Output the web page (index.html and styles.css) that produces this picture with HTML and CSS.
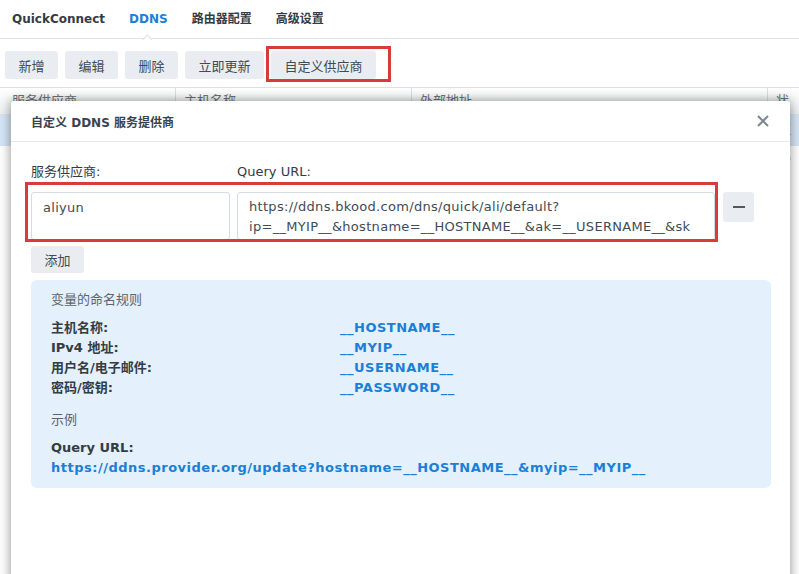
FILE: index.html
```html
<!DOCTYPE html>
<html>
<head>
  <meta charset="utf-8">
  <title>DDNS</title>
  <link rel="stylesheet" href="styles.css">
</head>
<body>
  <div class="tabbar">
    <span class="tab">QuickConnect</span>
    <span class="tab active">DDNS</span>
    <span class="tab">路由器配置</span>
    <span class="tab">高级设置</span>
  </div>

  <div class="toolbar">
    <button class="btn">新增</button>
    <button class="btn">编辑</button>
    <button class="btn">删除</button>
    <button class="btn">立即更新</button>
    <button class="btn">自定义供应商</button>
  </div>

  <div class="grid">
    <div class="grid-head">
      <div class="col c1">服务供应商</div>
      <div class="col c2">主机名称</div>
      <div class="col c3">外部地址</div>
      <div class="col c4">状态</div>
    </div>
    <div class="grid-row selected">
      <div class="col c1"></div>
      <div class="col c2"></div>
      <div class="col c3"></div>
      <div class="col c4 ok">正常</div>
    </div>
  </div>

  <div class="mark mark-toolbar"></div>

  <div class="dialog">
    <div class="dialog-head">
      <span class="dialog-title">自定义 DDNS 服务提供商</span>
      <button class="close" title="关闭">
        <svg width="12" height="12" viewBox="0 0 12 12"><path d="M1 1L11 11M11 1L1 11" stroke="#7d868f" stroke-width="2" fill="none"/></svg>
      </button>
    </div>
    <div class="dialog-body">
      <div class="form-labels">
        <label class="lbl-name">服务供应商:</label>
        <label>Query URL:</label>
      </div>
      <div class="form-row">
        <input class="field field-name" type="text" value="aliyun">
        <textarea class="field field-url">https://ddns.bkood.com/dns/quick/ali/default?
ip=__MYIP__&amp;hostname=__HOSTNAME__&amp;ak=__USERNAME__&amp;sk
=__PASSWORD__</textarea>
        <button class="btn btn-minus">
          <svg width="12" height="12" viewBox="0 0 12 12"><rect x="0" y="5" width="12" height="2" fill="#4f5963"/></svg>
        </button>
      </div>
      <button class="btn btn-add">添加</button>

      <div class="info">
        <div class="info-title">变量的命名规则</div>
        <div class="vars">
          <span>主机名称:</span><span class="val">__HOSTNAME__</span>
          <span>IPv4 地址:</span><span class="val">__MYIP__</span>
          <span>用户名/电子邮件:</span><span class="val">__USERNAME__</span>
          <span>密码/密钥:</span><span class="val">__PASSWORD__</span>
        </div>
        <div class="info-title example">示例</div>
        <div class="example-label">Query URL:</div>
        <div class="example-url">https://ddns.provider.org/update?hostname=__HOSTNAME__&amp;myip=__MYIP__</div>
      </div>
    </div>
    <div class="mark mark-form"></div>
  </div>
</body>
</html>
```

FILE: styles.css
```css
body {
  margin: 0;
  height: 574px;
  overflow: hidden;
  position: relative;
  font-family: "DejaVu Sans", "Noto Sans CJK SC", sans-serif;
  font-size: 13px;
  color: #414b55;
  background: #fff;
}
.tabbar {
  display: flex;
  gap: 24px;
  height: 38px;
  padding-left: 12px;
  border-bottom: 1px solid #dde1e5;
}
.tab {
  position: relative;
  font-size: 12px;
  font-weight: bold;
  line-height: 38px;
  color: #333c45;
}
.tab.active {
  color: #1a7fd6;
}
.tab.active::after {
  content: "";
  position: absolute;
  left: 50%;
  top: 36px;
  width: 6px;
  height: 6px;
  margin-left: -4px;
  background: #fff;
  border-left: 1px solid #dde1e5;
  border-top: 1px solid #dde1e5;
  transform: rotate(45deg);
}
.toolbar {
  display: flex;
  gap: 7px;
  padding: 12px 5px 8px;
}
.btn {
  font: inherit;
  height: 28px;
  padding: 0 13.5px;
  border: none;
  border-radius: 3px;
  background: #e9edf1;
  color: #414b55;
}
.grid-head, .grid-row {
  display: flex;
}
.grid-head {
  height: 26px;
  border-top: 1px solid #dcdfe3;
  background: linear-gradient(#fff, #eef0f2);
  color: #6b737b;
}
.grid-row {
  height: 32px;
}
.grid-row.selected {
  background: #d6e6f6;
}
.col {
  box-sizing: border-box;
  padding-left: 8px;
  line-height: 26px;
  border-right: 1px solid #dcdfe3;
}
.grid-row .col {
  border-right: none;
  line-height: 32px;
}
.c1 { width: 176px; padding-left: 12px; }
.c2 { width: 236px; }
.c3 { width: 356px; }
.c4 { flex: 1; border-right: none; }
.grid-row .c4 { padding-left: 10px; }
.ok { color: #2a9a2a; }
.mark {
  position: absolute;
  box-sizing: border-box;
  border: 3px solid #d93b3b;
  pointer-events: none;
}
.mark-toolbar {
  left: 266px;
  top: 46px;
  width: 125px;
  height: 36px;
}
.mark-form {
  left: 14px;
  top: 81px;
  width: 693px;
  height: 60px;
}
.dialog {
  position: absolute;
  left: 11px;
  top: 101px;
  width: 779px;
  height: 520px;
  background: #fff;
  border-radius: 3px 3px 0 0;
  box-shadow: 0 0 12px rgba(0, 0, 0, 0.45);
}
.dialog-head {
  display: flex;
  align-items: center;
  justify-content: space-between;
  height: 40px;
  padding: 0 21px 0 20px;
  border-bottom: 1px solid #e6e9ec;
}
.dialog-title {
  font-size: 12px;
  font-weight: bold;
  color: #3a434c;
}
.close {
  display: flex;
  padding: 0;
  border: none;
  background: none;
}
.dialog-body {
  padding: 20px 19px 0 20px;
}
.form-labels {
  display: flex;
  line-height: 20px;
  color: #333c45;
}
.lbl-name {
  width: 206px;
}
.form-row {
  display: flex;
  align-items: flex-start;
  gap: 7px;
  margin-top: 10px;
}
.field {
  box-sizing: border-box;
  height: 48px;
  margin: 0;
  padding: 4px 11px;
  border: 1px solid #d5dbe1;
  border-radius: 3px;
  font: inherit;
  line-height: 20px;
  letter-spacing: 0.3px;
  color: #414b55;
  background: #fff;
}
.field-name {
  width: 199px;
  padding-bottom: 22px;
}
.field-url {
  width: 478px;
  resize: none;
  overflow: hidden;
  white-space: pre;
}
.btn-minus {
  display: flex;
  align-items: center;
  justify-content: center;
  width: 31px;
  height: 30px;
  margin-left: 1px;
  padding: 0;
}
.btn-add {
  height: 27px;
  margin-top: 6px;
}
.info {
  margin-top: 7px;
  padding: 10px 20px;
  border-radius: 6px;
  background: #e4f0fb;
  line-height: 20px;
  color: #333c45;
}
.info-title {
  color: #5c656e;
}
.vars {
  display: grid;
  grid-template-columns: 289px auto;
  margin-top: 8px;
  font-weight: bold;
}
.val, .example-url {
  color: #1a7fd6;
  font-weight: bold;
  letter-spacing: 0.5px;
}
.example {
  margin-top: 12px;
}
.example-label {
  margin-top: 8px;
  font-weight: bold;
}
```
